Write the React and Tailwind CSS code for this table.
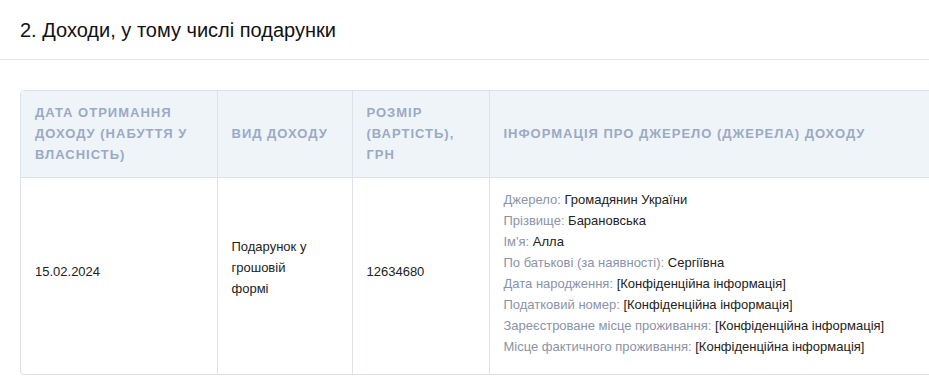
import React from 'react';

const source = [
  ['Джерело', 'Громадянин України'],
  ['Прізвище', 'Барановська'],
  ["Ім'я", 'Алла'],
  ['По батькові (за наявності)', 'Сергіївна'],
  ['Дата народження', '[Конфіденційна інформація]'],
  ['Податковий номер', '[Конфіденційна інформація]'],
  ['Зареєстроване місце проживання', '[Конфіденційна інформація]'],
  ['Місце фактичного проживання', '[Конфіденційна інформація]'],
];

const th = 'px-[14px] py-[11px] text-left align-middle font-bold uppercase text-[13px] leading-[21px] tracking-[1px] text-[#9aaac6] border-r border-[#dde2e8]';
const td = 'px-[14px] align-middle text-[13px] leading-[21px] text-[#222] border-r border-[#dde2e8]';

export default function App() {
  return (
    <div className="w-[929px] h-[378px] overflow-hidden bg-white font-['Liberation_Sans',Arial,sans-serif]">
      <div className="h-[60px] flex items-center px-5 border-b border-[#e2e5e9]">
        <h2 className="text-[20px] text-[#111] font-normal">2. Доходи, у тому числі подарунки</h2>
      </div>
      <div className="ml-5 mt-[30px] w-[1000px] border border-[#dde2e8] rounded-[4px] overflow-hidden">
        <table className="w-full border-collapse table-fixed">
          <colgroup>
            <col className="w-[196px]" />
            <col className="w-[135px]" />
            <col className="w-[137px]" />
            <col />
          </colgroup>
          <thead>
            <tr className="bg-[#eff4f8] border-b border-[#dde2e8] h-[86px]">
              <th className={th}>Дата отримання доходу (набуття у власність)</th>
              <th className={th}>Вид доходу</th>
              <th className={th}>Розмір (вартість), грн</th>
              <th className={th}>Інформація про джерело (джерела) доходу</th>
            </tr>
          </thead>
          <tbody>
            <tr>
              <td className={td + ' pb-[8px]'}>15.02.2024</td>
              <td className={td + ' pr-[30px] pb-[16px]'}>Подарунок у грошовій формі</td>
              <td className={td + ' pb-[8px]'}>12634680</td>
              <td className={td + ' pt-[11px] pb-[17px]'}>
                {source.map(([k, v]) => (
                  <div key={k} className="whitespace-nowrap">
                    <span className="text-[#8a93a8]">{k}: </span>
                    <span>{v}</span>
                  </div>
                ))}
              </td>
            </tr>
          </tbody>
        </table>
      </div>
    </div>
  );
}
